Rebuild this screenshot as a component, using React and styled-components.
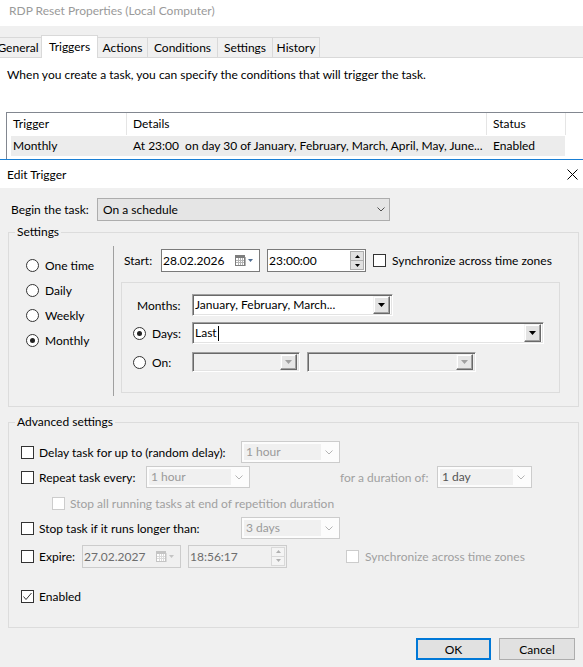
import React from 'react';
import styled, { createGlobalStyle } from 'styled-components';

const GlobalStyle = createGlobalStyle`
  html, body { margin: 0; padding: 0; background: #fff; }
  body {
    font-family: Lato, 'Noto Sans', sans-serif;
    font-size: 12px;
    color: #000;
  }
  * { box-sizing: border-box; }
`;

const Screen = styled.div`
  width: 583px;
  height: 667px;
  overflow: hidden;
  display: flex;
  flex-direction: column;
  background: #fff;
`;

const BgTitle = styled.div`
  height: 26px;
  padding: 3px 0 0 9px;
  line-height: 16px;
  color: #9a9a9a;
`;

const TabStrip = styled.div`
  height: 32px;
  background: #f0f0f0;
  border-bottom: 1px solid #d9d9d9;
  display: flex;
  align-items: flex-end;
`;

const TabRow = styled.div`
  display: flex;
  align-items: flex-end;
  margin-left: -6px;
`;

const Tab = styled.div`
  width: ${p => p.$w}px;
  height: ${p => (p.$active ? 23 : 20)}px;
  margin-bottom: ${p => (p.$active ? -1 : 0)}px;
  margin-right: -1px;
  position: relative;
  z-index: ${p => (p.$active ? 1 : 0)};
  background: ${p => (p.$active ? '#fff' : '#f0f0f0')};
  border: 1px solid #d9d9d9;
  border-bottom: none;
  display: flex;
  align-items: center;
  justify-content: center;
  padding-bottom: ${p => (p.$active ? 2 : 0)}px;
`;

const TabPage = styled.div`
  height: 101px;
  background: #fff;
  padding-top: 9px;
  overflow: hidden;
`;

const Intro = styled.div`
  padding-left: 7px;
  line-height: 16px;
`;

const ListView = styled.div`
  margin: 29px 0 0 6px;
  border-top: 1px solid #828790;
  border-left: 1px solid #828790;
  height: 60px;
`;

const ListHeader = styled.div`
  display: flex;
  height: 22px;
`;

const HeadCell = styled.div`
  width: ${p => p.$w}px;
  flex-shrink: 0;
  padding-left: 6px;
  line-height: 22px;
  border-right: 1px solid #e5e5e5;
`;

const ListRow = styled.div`
  display: flex;
  width: 554px;
  height: 20px;
  margin: 1px 0 0 4px;
  background: #ececec;
`;

const RowCell = styled.div`
  width: ${p => p.$w}px;
  flex-shrink: 0;
  padding-left: ${p => p.$pad}px;
  line-height: 20px;
  white-space: pre;
  overflow: hidden;
`;

const Dialog = styled.div`
  flex: 1;
  display: flex;
  flex-direction: column;
  border-top: 1px solid #1a7fd4;
`;

const DialogTitleBar = styled.div`
  height: 28px;
  background: #fff;
  display: flex;
  align-items: center;
  justify-content: space-between;
  padding: 0 5px 0 7px;
`;

const DialogBody = styled.div`
  flex: 1;
  background: #f0f0f0;
  padding: 10px 4px 0 8px;
`;

const BeginRow = styled.div`
  display: flex;
  align-items: center;
  height: 23px;
  padding-left: 3px;
`;

const FieldLabel = styled.div`
  width: ${p => p.$w}px;
  flex-shrink: 0;
  padding-left: ${p => p.$pad || 0}px;
  display: flex;
  align-items: center;
  gap: 6px;
`;

const WinCombo = styled.div`
  width: ${p => p.$w}px;
  height: 23px;
  background: #e5e5e5;
  border: 1px solid #adadad;
  display: flex;
  align-items: center;
  justify-content: space-between;
  padding: 0 4px 0 5px;
`;

const GroupBox = styled.fieldset`
  margin: ${p => p.$mt}px 0 0 0;
  padding: ${p => p.$pt}px 0 ${p => p.$pb}px 0;
  border: 1px solid #dcdcdc;
  width: 571px;
  min-width: 0;
`;

const Legend = styled.legend`
  margin-left: 6px;
  padding: 0 2px;
  line-height: 16px;
  height: 16px;
`;

const SettingsLayout = styled.div`
  display: flex;
  height: 150px;
`;

const RadioColumn = styled.div`
  width: 104px;
  flex-shrink: 0;
  padding: 13px 0 0 17px;
  display: flex;
  flex-direction: column;
  gap: 12px;
`;

const RadioItem = styled.div`
  display: flex;
  align-items: center;
  gap: 6px;
  height: 13px;
`;

const RadioCircle = styled.span`
  width: 13px;
  height: 13px;
  flex-shrink: 0;
  border: 1px solid #333;
  border-radius: 50%;
  background: #fff;
  display: flex;
  align-items: center;
  justify-content: center;
  &::after {
    content: '';
    display: ${p => (p.$checked ? 'block' : 'none')};
    width: 5px;
    height: 5px;
    border-radius: 50%;
    background: #222;
  }
`;

const DetailColumn = styled.div`
  flex: 1;
  border-left: 1px solid #a0a0a0;
  padding: 3px 0 3px 7px;
`;

const StartRow = styled.div`
  display: flex;
  align-items: center;
  height: 23px;
  padding-left: 3px;
  gap: 7px;
`;

const PickerBox = styled.div`
  width: 99px;
  height: ${p => p.$h || 23}px;
  flex-shrink: 0;
  border: 1px solid ${p => (p.$off ? '#cccccc' : '#7a7a7a')};
  background: ${p => (p.$off ? '#f0f0f0' : '#fff')};
  color: ${p => (p.$off ? '#6d6d6d' : '#000')};
  display: flex;
  align-items: center;
  padding-left: 1px;
`;

const PickerText = styled.span`
  flex: 1;
`;

const PickerIcons = styled.span`
  display: flex;
  align-items: center;
  gap: 2px;
  padding-right: 3px;
`;

const Spinner = styled.div`
  width: 15px;
  height: 100%;
  padding: 1px 1px 1px 0;
  display: flex;
  flex-direction: column;
`;

const SpinBtn = styled.div`
  flex: 1;
  background: ${p => (p.$off ? '#f4f4f4' : '#e1e1e1')};
  border: 1px solid ${p => (p.$off ? '#d9d9d9' : '#adadad')};
  display: flex;
  align-items: center;
  justify-content: center;
  & + & { border-top: none; }
`;

const CheckLabel = styled.div`
  display: flex;
  align-items: center;
  gap: 6px;
  color: ${p => (p.$off ? '#a0a0a0' : '#000')};
  margin-left: ${p => p.$ml || 0}px;
`;

const CheckBox = styled.span`
  width: 13px;
  height: 13px;
  flex-shrink: 0;
  border: 1px solid ${p => (p.$off ? '#cccccc' : '#333')};
  background: #fff;
  display: flex;
  align-items: center;
  justify-content: center;
`;

const InnerGroup = styled.div`
  width: 439px;
  margin-top: 10px;
  border: 1px solid #dcdcdc;
  padding: 11px 0 20px 11px;
`;

const InnerRow = styled.div`
  display: flex;
  align-items: center;
  height: ${p => p.$h || 22}px;
  margin-top: ${p => p.$mt || 0}px;
  gap: 7px;
`;

const ClassicCombo = styled.div`
  width: ${p => p.$w}px;
  height: ${p => p.$h || 22}px;
  flex-shrink: 0;
  background: ${p => (p.$off ? '#f0f0f0' : '#fff')};
  border: 1px solid;
  border-color: #a0a0a0 #fff #fff #a0a0a0;
  box-shadow: inset 1px 1px 0 #696969, inset -1px -1px 0 #e3e3e3;
  display: flex;
  align-items: center;
  padding: 1px 2px 1px 2px;
  line-height: 16px;
`;

const ComboText = styled.span`
  flex: 1;
  white-space: nowrap;
  overflow: hidden;
  display: flex;
  align-items: center;
`;

const Caret = styled.span`
  width: 1px;
  height: 15px;
  background: #000;
  margin-left: 1px;
`;

const ClassicButton = styled.span`
  width: 17px;
  height: 100%;
  flex-shrink: 0;
  background: ${p => (p.$off ? '#e6e6e6' : '#e3e3e3')};
  border: 1px solid;
  border-color: #f4f4f4 #696969 #696969 #f4f4f4;
  box-shadow: inset -1px -1px 0 #a0a0a0, inset 1px 1px 0 #fff;
  display: flex;
  align-items: center;
  justify-content: center;
`;

const AdvRows = styled.div`
  padding-left: 12px;
`;

const AdvRow = styled.div`
  display: flex;
  align-items: center;
  height: 22px;
  margin-top: ${p => p.$mt || 0}px;
  padding-left: ${p => p.$indent || 0}px;
`;

const CheckCell = styled.div`
  width: ${p => (p.$w ? `${p.$w}px` : 'auto')};
  flex-shrink: 0;
  display: flex;
  align-items: center;
  gap: 5px;
  color: ${p => (p.$off ? '#a0a0a0' : '#000')};
`;

const FlatCombo = styled.div`
  width: ${p => p.$w}px;
  height: 22px;
  flex-shrink: 0;
  border: 1px solid #cccccc;
  background: #fcfcfc;
  display: flex;
  align-items: center;
  padding: 2px;
  margin-left: ${p => p.$ml || 0}px;
`;

const FlatComboText = styled.span`
  flex: 1;
  height: 100%;
  background: #f0f0f0;
  color: ${p => (p.$dark ? '#555' : '#9a9a9a')};
  padding-left: 2px;
  line-height: 16px;
  margin-right: 4px;
`;

const DimLabel = styled.span`
  width: ${p => p.$w}px;
  flex-shrink: 0;
  margin-left: ${p => p.$ml || 0}px;
  color: #a0a0a0;
`;

const Gap = styled.span`
  width: ${p => p.$w}px;
  flex-shrink: 0;
`;

const ButtonBar = styled.div`
  display: flex;
  justify-content: flex-end;
  gap: 8px;
  margin-top: 10px;
  padding-right: 4px;
`;

const DlgButton = styled.button`
  width: ${p => p.$w}px;
  height: 22px;
  font: inherit;
  color: #000;
  background: #e1e1e1;
  border: ${p => (p.$primary ? '2px solid #0078d7' : '1px solid #adadad')};
  padding: 0;
`;

const Chevron = ({ color = '#505050' }) => (
  <svg width="8" height="5" viewBox="0 0 8 5">
    <polyline points="0.5,0.5 4,4 7.5,0.5" fill="none" stroke={color} strokeWidth="1" />
  </svg>
);

const Tri = ({ color = '#000', up }) => (
  <svg width="7" height="4" viewBox="0 0 7 4">
    <polygon points={up ? '0,4 7,4 3.5,0' : '0,0 7,0 3.5,4'} fill={color} />
  </svg>
);

const SmallTri = ({ color = '#000', up }) => (
  <svg width="5" height="3" viewBox="0 0 5 3">
    <polygon points={up ? '0,3 5,3 2.5,0' : '0,0 5,0 2.5,3'} fill={color} />
  </svg>
);

const CalendarIcon = ({ off }) => {
  const c = off ? '#c4c4c4' : '#7d7d7d';
  const g = off ? '#dadada' : '#b4b4b4';
  return (
    <svg width="11" height="11" viewBox="0 0 11 11">
      <rect x="0.5" y="0.5" width="9" height="10" fill="#fff" stroke={c} />
      <rect x="1" y="1" width="8" height="2" fill={c} />
      <line x1="1" y1="5.5" x2="9" y2="5.5" stroke={g} />
      <line x1="1" y1="7.5" x2="9" y2="7.5" stroke={g} />
      <line x1="3.5" y1="3" x2="3.5" y2="10" stroke={g} />
      <line x1="5.5" y1="3" x2="5.5" y2="10" stroke={g} />
      <line x1="7.5" y1="3" x2="7.5" y2="10" stroke={g} />
      <line x1="10.5" y1="2" x2="10.5" y2="11" stroke={g} />
    </svg>
  );
};

const CheckMark = () => (
  <svg width="11" height="11" viewBox="0 0 11 11">
    <polyline points="1.5,5.5 4,8.5 9.5,2" fill="none" stroke="#333" strokeWidth="1" />
  </svg>
);

const CloseIcon = () => (
  <svg width="11" height="11" viewBox="0 0 11 11">
    <line x1="0.5" y1="0.5" x2="10.5" y2="10.5" stroke="#000" strokeWidth="1" />
    <line x1="10.5" y1="0.5" x2="0.5" y2="10.5" stroke="#000" strokeWidth="1" />
  </svg>
);

const tabs = [
  { label: 'General', w: 48 },
  { label: 'Triggers', w: 57, active: true },
  { label: 'Actions', w: 51 },
  { label: 'Conditions', w: 71 },
  { label: 'Settings', w: 56 },
  { label: 'History', w: 48 },
];

const schedules = ['One time', 'Daily', 'Weekly', 'Monthly'];

const Box = ({ checked, off }) => (
  <CheckBox $off={off}>{checked && <CheckMark />}</CheckBox>
);

const DatePicker = ({ value, off }) => (
  <PickerBox $off={off}>
    <PickerText>{value}</PickerText>
    <PickerIcons>
      <CalendarIcon off={off} />
      <SmallTri color={off ? '#c4c4c4' : '#4f6d92'} />
      <Gap $w={1} />
    </PickerIcons>
  </PickerBox>
);

const TimePicker = ({ value, off }) => (
  <PickerBox $off={off}>
    <PickerText>{value}</PickerText>
    <Spinner>
      <SpinBtn $off={off}><SmallTri up color={off ? '#b0b0b0' : '#000'} /></SpinBtn>
      <SpinBtn $off={off}><SmallTri color={off ? '#b0b0b0' : '#000'} /></SpinBtn>
    </Spinner>
  </PickerBox>
);

const Combo = ({ w, h, off, children }) => (
  <ClassicCombo $w={w} $h={h} $off={off}>
    <ComboText>{children}</ComboText>
    <ClassicButton $off={off}><Tri color={off ? '#a0a0a0' : '#000'} /></ClassicButton>
  </ClassicCombo>
);

const Dropdown = ({ w, ml, dark, children }) => (
  <FlatCombo $w={w} $ml={ml}>
    <FlatComboText $dark={dark}>{children}</FlatComboText>
    <Chevron color="#b4b4b4" />
    <Gap $w={4} />
  </FlatCombo>
);

const App = () => {
  return (
    <Screen>
      <GlobalStyle />
      <BgTitle>RDP Reset Properties (Local Computer)</BgTitle>
      <TabStrip>
        <TabRow>
          {tabs.map(t => (
            <Tab key={t.label} $w={t.w} $active={t.active}>{t.label}</Tab>
          ))}
        </TabRow>
      </TabStrip>
      <TabPage>
        <Intro>When you create a task, you can specify the conditions that will trigger the task.</Intro>
        <ListView>
          <ListHeader>
            <HeadCell $w={120}>Trigger</HeadCell>
            <HeadCell $w={360}>Details</HeadCell>
            <HeadCell $w={79}>Status</HeadCell>
          </ListHeader>
          <ListRow>
            <RowCell $w={116} $pad={2}>Monthly</RowCell>
            <RowCell $w={360} $pad={6}>At 23:00  on day 30 of January, February, March, April, May, June...</RowCell>
            <RowCell $w={78} $pad={6}>Enabled</RowCell>
          </ListRow>
        </ListView>
      </TabPage>

      <Dialog>
        <DialogTitleBar>
          <span>Edit Trigger</span>
          <CloseIcon />
        </DialogTitleBar>
        <DialogBody>
          <BeginRow>
            <FieldLabel $w={86}>Begin the task:</FieldLabel>
            <WinCombo $w={293}>
              <span>On a schedule</span>
              <Chevron />
            </WinCombo>
          </BeginRow>

          <GroupBox $mt={3} $pt={6} $pb={10}>
            <Legend>Settings</Legend>
            <SettingsLayout>
              <RadioColumn>
                {schedules.map(s => (
                  <RadioItem key={s}>
                    <RadioCircle $checked={s === 'Monthly'} />
                    {s}
                  </RadioItem>
                ))}
              </RadioColumn>
              <DetailColumn>
                <StartRow>
                  <FieldLabel $w={30}>Start:</FieldLabel>
                  <DatePicker value="28.02.2026" />
                  <TimePicker value="23:00:00" />
                  <CheckLabel>
                    <Box />
                    Synchronize across time zones
                  </CheckLabel>
                </StartRow>
                <InnerGroup>
                  <InnerRow>
                    <FieldLabel $w={52} $pad={4}>Months:</FieldLabel>
                    <Combo w={201}>January, February, March...</Combo>
                  </InnerRow>
                  <InnerRow $mt={6}>
                    <FieldLabel $w={52}>
                      <RadioCircle $checked />
                      Days:
                    </FieldLabel>
                    <Combo w={352}>Last<Caret /></Combo>
                  </InnerRow>
                  <InnerRow $mt={8} $h={20}>
                    <FieldLabel $w={52}>
                      <RadioCircle />
                      On:
                    </FieldLabel>
                    <Combo w={108} h={20} off />
                    <Combo w={169} h={20} off />
                  </InnerRow>
                </InnerGroup>
              </DetailColumn>
            </SettingsLayout>
          </GroupBox>

          <GroupBox $mt={7} $pt={11} $pb={20}>
            <Legend>Advanced settings</Legend>
            <AdvRows>
              <AdvRow>
                <CheckCell $w={220}><Box />Delay task for up to (random delay):</CheckCell>
                <Dropdown w={99}>1 hour</Dropdown>
              </AdvRow>
              <AdvRow $mt={3}>
                <CheckCell $w={125}><Box />Repeat task every:</CheckCell>
                <Dropdown w={104}>1 hour</Dropdown>
                <DimLabel $w={97} $ml={90}>for a duration of:</DimLabel>
                <Dropdown w={95} dark>1 day</Dropdown>
              </AdvRow>
              <AdvRow $mt={4} $indent={31}>
                <CheckCell $off><Box off />Stop all running tasks at end of repetition duration</CheckCell>
              </AdvRow>
              <AdvRow $mt={3}>
                <CheckCell $w={220}><Box />Stop task if it runs longer than:</CheckCell>
                <Dropdown w={99}>3 days</Dropdown>
              </AdvRow>
              <AdvRow $mt={6}>
                <CheckCell $w={61}><Box />Expire:</CheckCell>
                <DatePicker value="27.02.2027" off />
                <Gap $w={7} />
                <TimePicker value="18:56:17" off />
                <CheckLabel $off $ml={59}>
                  <Box off />
                  Synchronize across time zones
                </CheckLabel>
              </AdvRow>
              <AdvRow $mt={18}>
                <CheckCell><Box checked />Enabled</CheckCell>
              </AdvRow>
            </AdvRows>
          </GroupBox>

          <ButtonBar>
            <DlgButton $w={75} $primary>OK</DlgButton>
            <DlgButton $w={76}>Cancel</DlgButton>
          </ButtonBar>
        </DialogBody>
      </Dialog>
    </Screen>
  );
};

export default App;
